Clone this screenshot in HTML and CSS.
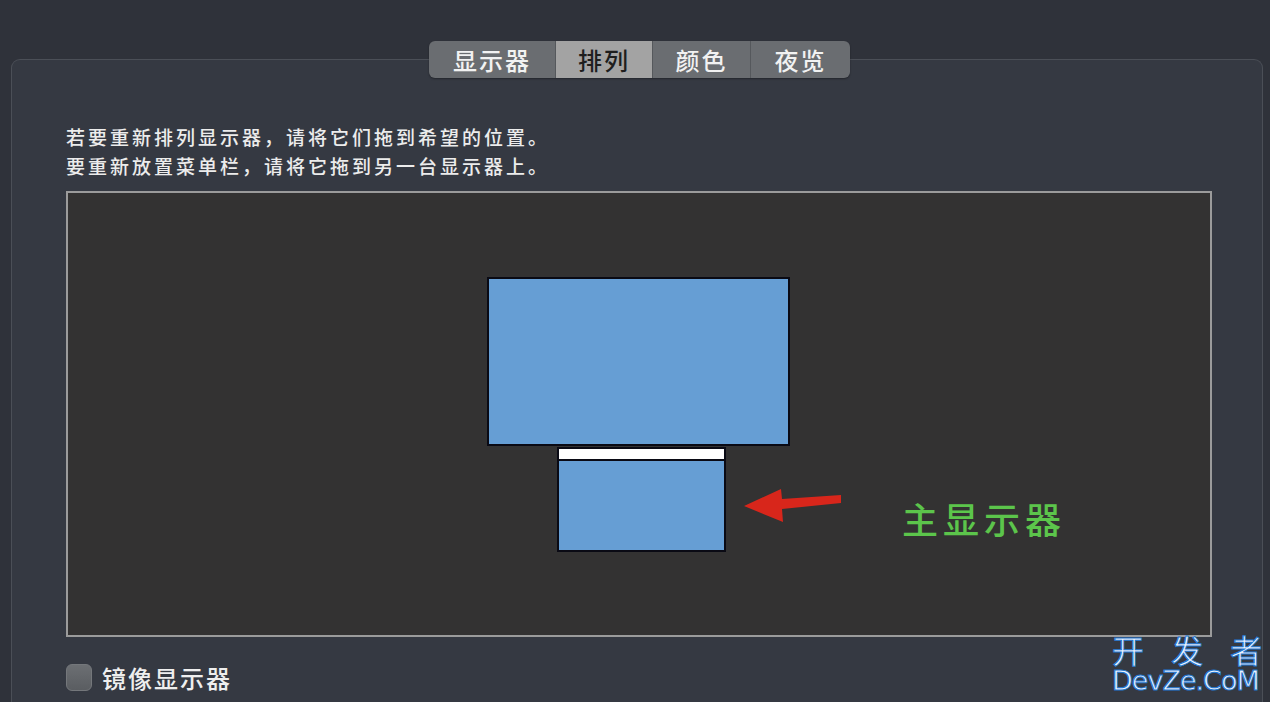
FILE: index.html
```html
<!DOCTYPE html>
<html lang="zh-CN">
<head>
    <meta charset="UTF-8">
    <meta name="viewport" content="width=device-width, initial-scale=1.0">
    <title>显示器 - 排列</title>
    <link rel="stylesheet" href="styles.css">
</head>
<body>
    <div class="tabs">
        <div class="tab">显示器</div>
        <div class="tab active">排列</div>
        <div class="tab">颜色</div>
        <div class="tab">夜览</div>
    </div>

    <div class="panel">
        <p class="hint">若要重新排列显示器，请将它们拖到希望的位置。<br>要重新放置菜单栏，请将它拖到另一台显示器上。</p>

        <div class="arrange">
            <div class="monitor big"></div>
            <div class="monitor main">
                <div class="menubar"></div>
            </div>
            <svg class="arrow" width="104" height="36" viewBox="0 0 104 36">
                <path d="M3 17 L40 0 L41 10 L100 6 L100 14 L41 20 L42 33 Z" fill="#d8261b"/>
            </svg>
            <div class="note">主显示器</div>
        </div>

        <label class="mirror">
            <span class="checkbox"></span>
            镜像显示器
        </label>
    </div>

    <div class="watermark">
        <div class="wm-cn">开 发 者</div>
        <div class="wm-en">DevZe.CoM</div>
    </div>
</body>
</html>
```

FILE: styles.css
```css
* {
    margin: 0;
    padding: 0;
    box-sizing: border-box;
}

body {
    font-family: "Noto Sans CJK SC", "Noto Sans", sans-serif;
    background: #2f323a;
    color: #e6e6e6;
    height: 702px;
    overflow: hidden;
    position: relative;
}

.tabs {
    position: absolute;
    top: 41px;
    left: 429px;
    display: flex;
    height: 37px;
    border-radius: 6px;
    overflow: hidden;
    background: #6a6d71;
    box-shadow: 0 1px 2px rgba(0, 0, 0, 0.35);
    z-index: 2;
}

.tab {
    display: flex;
    align-items: center;
    justify-content: center;
    font-size: 24px;
    font-weight: 500;
    letter-spacing: 2px;
    color: #f2f2f2;
    border-left: 1px solid #55585c;
    line-height: 1;
}

.tab:first-child {
    border-left: none;
    width: 126px;
}

.tab:nth-child(2) {
    width: 97px;
}

.tab:nth-child(3) {
    width: 98px;
}

.tab:nth-child(4) {
    width: 100px;
}

.tab.active {
    background: #a3a3a3;
    color: #1e1e1e;
}

.panel {
    margin: 59px 0 0 11px;
    width: 1252px;
    height: 643px;
    background: #353942;
    border: 1px solid #4b4f57;
    border-bottom: none;
    border-radius: 9px 9px 0 0;
    padding: 62px 50px 0 54px;
}

.hint {
    font-size: 19px;
    font-weight: 500;
    line-height: 29px;
    letter-spacing: 3px;
    color: #ececec;
}

.arrange {
    position: relative;
    margin-top: 11px;
    width: 1146px;
    height: 446px;
    background: #333232;
    border: 2px solid #9b9b9b;
}

.monitor {
    position: absolute;
    background: #669ed4;
    border: 2px solid #0a0a14;
}

.big {
    left: 419px;
    top: 84px;
    width: 303px;
    height: 169px;
}

.main {
    left: 489px;
    top: 254px;
    width: 169px;
    height: 105px;
}

.menubar {
    height: 12px;
    background: #ffffff;
    border-bottom: 2px solid #0a0a14;
}

.arrow {
    position: absolute;
    left: 673px;
    top: 296px;
}

.note {
    position: absolute;
    left: 834px;
    top: 307px;
    font-size: 36px;
    font-weight: 500;
    line-height: 1;
    letter-spacing: 5px;
    color: #5cc54b;
}

.mirror {
    display: flex;
    align-items: center;
    gap: 10px;
    margin-top: 23px;
    font-size: 24px;
    font-weight: 500;
    letter-spacing: 2px;
    color: #eeeeee;
}

.checkbox {
    width: 26px;
    height: 27px;
    border-radius: 6px;
    background: linear-gradient(#6c6f73, #5a5d61);
    border: 1px solid #74777b;
}

.watermark {
    position: absolute;
    left: 1112px;
    top: 632px;
    color: #eaf3ff;
    -webkit-text-stroke: 1px #1f77d0;
    line-height: 1;
}

.wm-cn {
    font-family: "Noto Sans CJK SC", sans-serif;
    font-size: 32px;
    line-height: 34px;
    letter-spacing: 10px;
    white-space: pre;
}

.wm-en {
    font-family: "DejaVu Sans", sans-serif;
    font-size: 27px;
    line-height: 30px;
    letter-spacing: -1px;
}
```
